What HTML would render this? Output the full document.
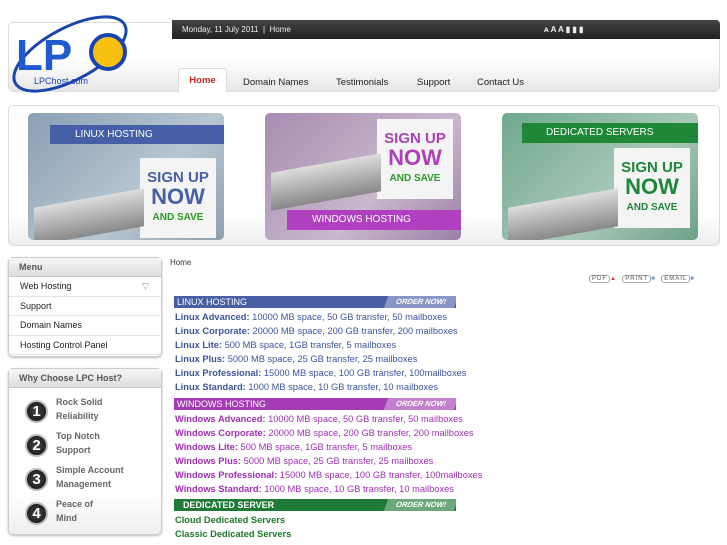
<!DOCTYPE html>
<html><head><meta charset="utf-8"><style>
*{margin:0;padding:0;box-sizing:border-box}
body{width:727px;height:545px;background:#fff;font-family:"Liberation Sans",sans-serif;position:relative;overflow:hidden;font-size:9px}
.abs{position:absolute}
.hdr{left:8px;top:22px;width:712px;height:70px;border:1px solid #ddd;border-radius:5px;background:linear-gradient(#fff 0%,#fff 55%,#e6e6e6 100%)}
.dark{left:172px;top:20px;width:548px;height:19px;background:linear-gradient(#444,#222);color:#eee;font-size:8px;line-height:19px;padding-left:10px;border-radius:0 4px 0 0}
.tab{top:73px;height:20px;font-size:9.5px;color:#222;line-height:16px}
.ban{left:8px;top:105px;width:712px;height:141px;border:1px solid #ddd;border-radius:5px;background:linear-gradient(#fff 78%,#eee)}
.b{top:113px;width:196px;height:127px;border-radius:5px;overflow:hidden}
.box{left:8px;width:154px;border:1px solid #ccc;border-radius:5px;background:#fff;box-shadow:0 1px 2px #bbb}
.bh{height:19px;background:linear-gradient(#f6f6f6,#ddd);font-weight:bold;color:#555;font-size:9px;line-height:19px;padding-left:10px;border-bottom:1px solid #ccc}
.mi{height:19.5px;border-bottom:1px solid #e6e6e6;font-size:9px;color:#222;line-height:19px;padding-left:11px}
.wi{left:15px;height:34px}
.num{position:absolute;left:2px;top:4px;width:23px;height:23px;border-radius:50%;background:radial-gradient(#444,#111);border:2px solid #bbb;color:#fff;font-weight:bold;font-size:15px;text-align:center;line-height:19px}
.wt{position:absolute;left:33px;top:-1px;font-size:9px;font-weight:bold;color:#666;line-height:14px;white-space:nowrap}
.bar{left:174px;width:282px;height:12px;color:#fff;font-size:9px;line-height:12px;padding-left:3px}
.bar span{position:absolute;right:0;top:0;width:70px;height:12px;background:rgba(255,255,255,.35);font-weight:bold;font-size:7.5px;text-align:center;transform:skewX(-20deg)}
.ln{left:175px;font-size:9.3px;line-height:14px;white-space:nowrap}
.ln b{font-weight:bold}
.bl{color:#3c55a0}.pu{color:#a030b4}.gr{color:#1a7a28}
</style></head><body>
<div class="abs hdr"></div>
<div class="abs dark">Monday, 11 July 2011 &nbsp;| &nbsp;Home<span style="position:absolute;left:372px;font-weight:bold">ᴀ A A ▮ ▮ ▮</span></div>
<div class="abs" style="left:10px;top:14px;width:125px;height:80px">
<svg width="125" height="80" viewBox="0 0 125 80"><ellipse cx="60" cy="40" rx="62" ry="26" transform="rotate(-28 60 40)" fill="none" stroke="#1a45b0" stroke-width="3"/><text x="6" y="56" font-family="Liberation Sans" font-weight="bold" font-size="44" fill="#1e5ad0">LP</text><circle cx="98" cy="38" r="17" fill="#f5c010" stroke="#1a45b0" stroke-width="4"/><text x="24" y="70" font-family="Liberation Sans" font-size="9" fill="#1a45b0">LPChost.com</text></svg></div>
<div class="abs tab" style="left:178px;width:49px;top:68px;height:25px;background:#fff;border:1px solid #ddd;border-bottom:none;border-radius:4px 4px 0 0;color:#c0282a;font-weight:bold;text-align:center;line-height:24px">Home</div>
<div class="abs tab" style="left:243px;top:75px">Domain Names</div>
<div class="abs tab" style="left:336px;top:75px">Testimonials</div>
<div class="abs tab" style="left:417px;top:75px">Support</div>
<div class="abs tab" style="left:477px;top:75px">Contact Us</div>

<div class="abs ban"></div>
<div class="abs b" style="left:28px;background:linear-gradient(135deg,#8aa0b4,#b8c6d0 60%,#8ea0b0)">
<div class="abs" style="left:22px;top:12px;width:174px;height:19px;background:#4660a8;color:#fff;font-size:10px;line-height:19px;padding-left:25px">LINUX HOSTING</div>
<div class="abs" style="left:112px;top:45px;width:76px;height:80px;background:#f4f4f4;text-align:center;font-weight:bold;color:#4860a8;font-size:15px;line-height:16px;padding-top:12px">SIGN UP<br><span style="font-size:22px;line-height:22px">NOW</span><br><span style="color:#2a9a28;font-size:10px">AND SAVE</span></div>
<div class="abs" style="left:6px;top:85px;width:110px;height:38px;background:linear-gradient(#ddd,#888);transform:skewY(-10deg)"></div></div>
<div class="abs b" style="left:265px;background:linear-gradient(135deg,#a88cb0,#c8b8cc 60%,#9c80a8)">
<div class="abs" style="left:112px;top:6px;width:76px;height:80px;background:#f4f4f4;text-align:center;font-weight:bold;color:#b040b8;font-size:15px;line-height:16px;padding-top:12px">SIGN UP<br><span style="font-size:22px;line-height:22px">NOW</span><br><span style="color:#2a9a28;font-size:10px">AND SAVE</span></div>
<div class="abs" style="left:6px;top:50px;width:110px;height:38px;background:linear-gradient(#ddd,#888);transform:skewY(-10deg)"></div>
<div class="abs" style="left:22px;top:97px;width:174px;height:20px;background:#b040c0;color:#fff;font-size:10px;line-height:20px;padding-left:25px">WINDOWS HOSTING</div></div>
<div class="abs b" style="left:502px;background:linear-gradient(135deg,#70a890,#a8c8b8 60%,#6ea088)">
<div class="abs" style="left:20px;top:10px;width:176px;height:20px;background:#1e8838;color:#fff;font-size:10px;line-height:20px;padding-left:24px">DEDICATED SERVERS</div>
<div class="abs" style="left:112px;top:35px;width:76px;height:80px;background:#f4f4f4;text-align:center;font-weight:bold;color:#1e8838;font-size:15px;line-height:16px;padding-top:12px">SIGN UP<br><span style="font-size:22px;line-height:22px">NOW</span><br><span style="font-size:10px">AND SAVE</span></div>
<div class="abs" style="left:6px;top:85px;width:110px;height:38px;background:linear-gradient(#ddd,#888);transform:skewY(-10deg)"></div></div>

<div class="abs box" style="top:257px;height:100px">
<div class="bh">Menu</div>
<div class="mi">Web Hosting<span style="position:absolute;right:12px;color:#999">▽</span></div>
<div class="mi">Support</div><div class="mi">Domain Names</div><div class="mi">Hosting Control Panel</div></div>
<div class="abs box" style="top:368px;height:167px;background:linear-gradient(#fff 75%,#eee)">
<div class="bh">Why Choose LPC Host?</div></div>
<div class="abs wi" style="top:396px;left:23px"><div class="num">1</div><div class="wt">Rock Solid<br>Reliability</div></div>
<div class="abs wi" style="top:430px;left:23px"><div class="num">2</div><div class="wt">Top Notch<br>Support</div></div>
<div class="abs wi" style="top:464px;left:23px"><div class="num">3</div><div class="wt">Simple Account<br>Management</div></div>
<div class="abs wi" style="top:498px;left:23px"><div class="num">4</div><div class="wt">Peace of<br>Mind</div></div>

<div class="abs" style="left:170px;top:258px;font-size:8px;color:#333">Home</div>
<div class="abs" style="left:589px;top:276px;font-size:6px;color:#555;letter-spacing:1px"><span style="border:1px solid #aaa;border-radius:3px;padding:0 2px">PDF</span><span style="color:#d33">▲</span> &nbsp;<span style="border:1px solid #aaa;border-radius:3px;padding:0 2px">PRINT</span><span style="color:#79b">■</span> &nbsp;<span style="border:1px solid #aaa;border-radius:3px;padding:0 2px">EMAIL</span><span style="color:#79b">■</span></div>

<div class="abs bar" style="top:296px;background:#4a5ea6">LINUX HOSTING<span>ORDER NOW!</span></div>
<div class="abs ln bl" style="top:310px"><b>Linux Advanced:</b> 10000 MB space, 50 GB transfer, 50 mailboxes<br><b>Linux Corporate:</b> 20000 MB space, 200 GB transfer, 200 mailboxes<br><b>Linux Lite:</b> 500 MB space, 1GB transfer, 5 mailboxes<br><b>Linux Plus:</b> 5000 MB space, 25 GB transfer, 25 mailboxes<br><b>Linux Professional:</b> 15000 MB space, 100 GB transfer, 100mailboxes<br><b>Linux Standard:</b> 1000 MB space, 10 GB transfer, 10 mailboxes</div>
<div class="abs bar" style="top:398px;background:#a43cb4">WINDOWS HOSTING<span>ORDER NOW!</span></div>
<div class="abs ln pu" style="top:412px"><b>Windows Advanced:</b> 10000 MB space, 50 GB transfer, 50 mailboxes<br><b>Windows Corporate:</b> 20000 MB space, 200 GB transfer, 200 mailboxes<br><b>Windows Lite:</b> 500 MB space, 1GB transfer, 5 mailboxes<br><b>Windows Plus:</b> 5000 MB space, 25 GB transfer, 25 mailboxes<br><b>Windows Professional:</b> 15000 MB space, 100 GB transfer, 100mailboxes<br><b>Windows Standard:</b> 1000 MB space, 10 GB transfer, 10 mailboxes</div>
<div class="abs bar" style="top:499px;background:#1e7a34;font-weight:bold;padding-left:9px">DEDICATED SERVER<span>ORDER NOW!</span></div>
<div class="abs ln gr" style="top:513px"><b>Cloud Dedicated Servers<br>Classic Dedicated Servers</b></div>
</body></html>
